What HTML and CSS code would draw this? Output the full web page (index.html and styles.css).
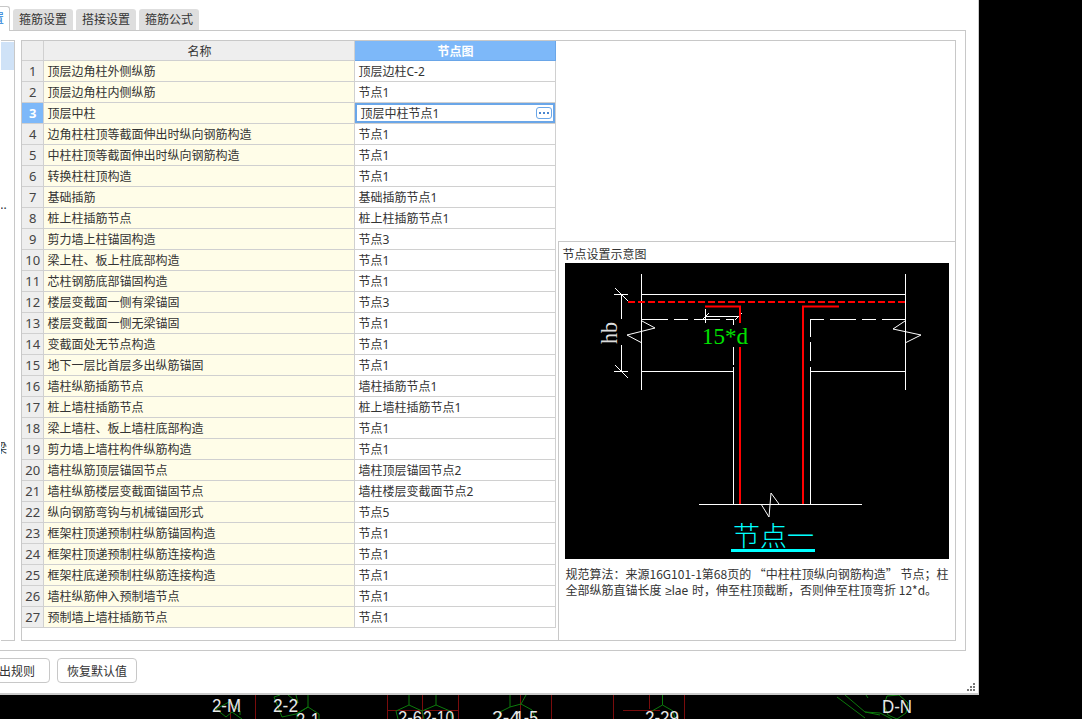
FILE: index.html
```html
<!DOCTYPE html>
<html lang="zh-CN">
<head>
    <meta charset="UTF-8">
    <title>节点设置</title>
    <link rel="stylesheet" href="styles.css">
</head>
<body>

    <div class="dialog">
        <div class="tabs">
            <div class="tab tab-active">节点设置</div>
            <div class="tab">箍筋设置</div>
            <div class="tab">搭接设置</div>
            <div class="tab">箍筋公式</div>
        </div>

        <div class="tab-body">
            <div class="side-list">
                <div class="side-selected"></div>
                <div class="side-dots">...</div>
                <div class="side-cut">梁</div>
            </div>

            <div class="grid-panel">
                <table class="grid">
                    <colgroup>
                        <col class="col-num">
                        <col class="col-name">
                        <col class="col-node">
                    </colgroup>
                    <thead>
                        <tr><th></th><th>名称</th><th class="th-active">节点图</th></tr>
                    </thead>
                    <tbody>
                        <tr><td class="num">1</td><td class="name">顶层边角柱外侧纵筋</td><td>顶层边柱C-2</td></tr>
                        <tr><td class="num">2</td><td class="name">顶层边角柱内侧纵筋</td><td>节点1</td></tr>
                        <tr>
                            <td class="num num-active">3</td>
                            <td class="name">顶层中柱</td>
                            <td class="editing"><div class="edit-box"><span>顶层中柱节点1</span><span class="more-btn"><i></i><i></i><i></i></span></div></td>
                        </tr>
                        <tr><td class="num">4</td><td class="name">边角柱柱顶等截面伸出时纵向钢筋构造</td><td>节点1</td></tr>
                        <tr><td class="num">5</td><td class="name">中柱柱顶等截面伸出时纵向钢筋构造</td><td>节点1</td></tr>
                        <tr><td class="num">6</td><td class="name">转换柱柱顶构造</td><td>节点1</td></tr>
                        <tr><td class="num">7</td><td class="name">基础插筋</td><td>基础插筋节点1</td></tr>
                        <tr><td class="num">8</td><td class="name">桩上柱插筋节点</td><td>桩上柱插筋节点1</td></tr>
                        <tr><td class="num">9</td><td class="name">剪力墙上柱锚固构造</td><td>节点3</td></tr>
                        <tr><td class="num">10</td><td class="name">梁上柱、板上柱底部构造</td><td>节点1</td></tr>
                        <tr><td class="num">11</td><td class="name">芯柱钢筋底部锚固构造</td><td>节点1</td></tr>
                        <tr><td class="num">12</td><td class="name">楼层变截面一侧有梁锚固</td><td>节点3</td></tr>
                        <tr><td class="num">13</td><td class="name">楼层变截面一侧无梁锚固</td><td>节点1</td></tr>
                        <tr><td class="num">14</td><td class="name">变截面处无节点构造</td><td>节点1</td></tr>
                        <tr><td class="num">15</td><td class="name">地下一层比首层多出纵筋锚固</td><td>节点1</td></tr>
                        <tr><td class="num">16</td><td class="name">墙柱纵筋插筋节点</td><td>墙柱插筋节点1</td></tr>
                        <tr><td class="num">17</td><td class="name">桩上墙柱插筋节点</td><td>桩上墙柱插筋节点1</td></tr>
                        <tr><td class="num">18</td><td class="name">梁上墙柱、板上墙柱底部构造</td><td>节点1</td></tr>
                        <tr><td class="num">19</td><td class="name">剪力墙上墙柱构件纵筋构造</td><td>节点1</td></tr>
                        <tr><td class="num">20</td><td class="name">墙柱纵筋顶层锚固节点</td><td>墙柱顶层锚固节点2</td></tr>
                        <tr><td class="num">21</td><td class="name">墙柱纵筋楼层变截面锚固节点</td><td>墙柱楼层变截面节点2</td></tr>
                        <tr><td class="num">22</td><td class="name">纵向钢筋弯钩与机械锚固形式</td><td>节点5</td></tr>
                        <tr><td class="num">23</td><td class="name">框架柱顶递预制柱纵筋锚固构造</td><td>节点1</td></tr>
                        <tr><td class="num">24</td><td class="name">框架柱顶递预制柱纵筋连接构造</td><td>节点1</td></tr>
                        <tr><td class="num">25</td><td class="name">框架柱底递预制柱纵筋连接构造</td><td>节点1</td></tr>
                        <tr><td class="num">26</td><td class="name">墙柱纵筋伸入预制墙节点</td><td>节点1</td></tr>
                        <tr><td class="num">27</td><td class="name">预制墙上墙柱插筋节点</td><td>节点1</td></tr>
                    </tbody>
                </table>

                <div class="preview">
                    <div class="preview-blank"></div>
                    <div class="preview-box">
                        <div class="preview-title">节点设置示意图</div>
                        <svg class="node-pic" width="384" height="296" viewBox="0 0 384 296">
                            <rect width="384" height="296" fill="#000"/>
                            <g fill="none" stroke="#fff" stroke-width="1">
                                <path d="M76.500 11V127M340.500 11V127M76.500 31.500H340.500"/>
                                <path d="M76.500 108.500H168.500M245.500 108.500H340.500"/>
                                <path d="M77 56.500H168" stroke-dasharray="26 6 14 6"/>
                                <path d="M245 56.500H340" stroke-dasharray="14 6 26 6"/>
                                <path d="M168.500 56V62M168.500 84V102M168.500 104V241"/>
                                <path d="M245.500 56V74M245.500 79V98M245.500 104V241"/>
                                <path d="M134 241.500H297"/>
                                <path d="M56.500 31V56M56.500 82V108M49 31.500H63M49 108.500H63M50 25L63 38M50 102L63 115"/>
                                <path d="M140.500 46V60M140.500 53.500H175M137 57L144 50M170 57L177 50"/>
                                <path d="M77 58L90 65L62 72L77 80"/>
                                <path d="M340 58L328 66L356 72L340 80"/>
                                <path d="M196 241L204 254L206 230L214 241"/>
                            </g>
                            <g fill="none" stroke="#f00" stroke-width="2">
                                <path d="M63 39H340" stroke-dasharray="7 3"/>
                                <path d="M140 43.500H175V60M175 84V241"/>
                                <path d="M274 43.500H238V241"/>
                            </g>
                            <text class="pic-hb" transform="translate(52 81) rotate(-90)" textLength="22" lengthAdjust="spacingAndGlyphs">hb</text>
                            <text class="pic-dim" x="137" y="81" textLength="46" lengthAdjust="spacingAndGlyphs">15*d</text>
                            <text class="pic-name" x="168" y="283">节点一</text>
                            <rect x="166" y="286" width="84" height="3" fill="#0ff"/>
                        </svg>
                        <p class="preview-note">规范算法：来源16G101-1第68页的 “中柱柱顶纵向钢筋构造” 节点；柱全部纵筋直锚长度 <span class="latin">≥lae</span> 时，伸至柱顶截断，否则伸至柱顶弯折 12*d。</p>
                    </div>
                </div>
            </div>
        </div>

        <div class="actions">
            <button class="btn btn-cut">导出规则</button>
            <button class="btn">恢复默认值</button>
        </div>

        <svg class="grip" width="8" height="8" viewBox="0 0 8 8">
            <path d="M6 0h2v2H6zM3 3h2v2H3zM6 3h2v2H6zM0 6h2v2H0zM3 6h2v2H3zM6 6h2v2H6z" fill="#777"/>
        </svg>
    </div>

    <svg class="cad" width="1082" height="24" viewBox="0 0 1082 24">
        <g fill="none" stroke="#7a0c0c" stroke-width="1">
            <path d="M230.500 8V24M255.500 0V24M387.500 0V24M422.500 0V24M458.500 0V24M520.500 0V24M551.500 0V24M613.500 0V24M649.500 0V14M684.500 0V24"/>
            <path d="M387 15.500H459M623 15.500H660"/>
        </g>
        <g fill="none" stroke="#0c7a0c" stroke-width="1">
            <path d="M216 14L229 7L240 16L240 20M216 14L226 22L232 17M232 17L242 24"/>
            <path d="M274 2L280 0M274 2L282 22L296 19L308 12M296 0L298 8L288 0"/>
            <path d="M308 0V12L297 19V24M308 12L319 19V24"/>
            <path d="M409 0V10L396 16L398 24M409 10L422 16L424 24"/>
            <path d="M436 0V10L422 16M436 10L450 16L452 24"/>
            <path d="M510 0V12L500 17L498 24M510 12L521 9L532 15L536 24M526 0L521 9"/>
            <path d="M662.500 0V10L652 16M662.500 10L673 16L675 24"/>
            <path d="M837 2L865 23M845 0L865 17L880 20M865 17L880 18L892 24M866 0L868 3"/>
            <path d="M887 1L899 0L908 8L906 18L897 24L888 20L884 10Z"/>
        </g>
        <g class="cad-text">
            <text x="212" y="17" textLength="29" lengthAdjust="spacingAndGlyphs">2-M</text>
            <text x="273" y="17" textLength="25" lengthAdjust="spacingAndGlyphs">2-2</text>
            <text x="296" y="31" textLength="24" lengthAdjust="spacingAndGlyphs">2-1</text>
            <text x="398" y="29" textLength="24" lengthAdjust="spacingAndGlyphs">2-6</text>
            <text x="423" y="29" textLength="31" lengthAdjust="spacingAndGlyphs">2-10</text>
            <text x="492" y="29" textLength="28" lengthAdjust="spacingAndGlyphs">2-4</text>
            <text x="515" y="29" textLength="23" lengthAdjust="spacingAndGlyphs">1-5</text>
            <text x="645" y="29" textLength="34" lengthAdjust="spacingAndGlyphs">2-29</text>
            <text x="882" y="18" textLength="30" lengthAdjust="spacingAndGlyphs">D-N</text>
        </g>
    </svg>

</body>
</html>
```

FILE: styles.css
```css
body {
    font-family: "Noto Sans", "Noto Sans CJK SC", sans-serif;
    font-size: 12px;
    color: #333;
    background-color: #000;
    margin: 0;
    padding: 0;
    width: 1082px;
    height: 719px;
    overflow: hidden;
}

.dialog {
    position: relative;
    box-sizing: border-box;
    width: 979px;
    height: 695px;
    background-color: #fff;
    border-right: 1px solid #ccc;
    border-bottom: 2px solid #ccc;
    overflow: hidden;
}

.tabs {
    display: flex;
    align-items: flex-end;
    gap: 3px;
    height: 30px;
    margin-left: -50px;
}

.tab {
    width: 60px;
    height: 21px;
    line-height: 21px;
    text-align: center;
    background-color: #dedede;
    border-radius: 3px 3px 0 0;
}

.tab-active {
    box-sizing: border-box;
    height: 25px;
    line-height: 24px;
    color: #2a7fd8;
    background-color: #fff;
    border: 1px solid #c8c8c8;
    border-bottom: none;
    margin-bottom: -1px;
}

.tab-body {
    display: flex;
    gap: 6px;
    box-sizing: border-box;
    width: 967px;
    height: 621px;
    margin-left: -1px;
    padding: 9px;
    padding-left: 1px;
    border: 1px solid #c8c8c8;
}

.side-list {
    position: relative;
    box-sizing: border-box;
    width: 14px;
    height: 601px;
    padding-top: 1px;
    border: 1px solid #c8c8c8;
    border-left: none;
    overflow: hidden;
}

.side-selected {
    height: 28px;
    background-color: #cfe2f7;
}

.side-dots {
    position: absolute;
    left: -4px;
    top: 155px;
}

.side-cut {
    position: absolute;
    left: -6px;
    top: 398px;
}

.grid-panel {
    display: flex;
    align-items: flex-start;
    box-sizing: border-box;
    width: 937px;
    height: 601px;
    border: 1px solid #c8c8c8;
}

.grid {
    table-layout: fixed;
    border-collapse: collapse;
    width: 534px;
    flex-shrink: 0;
}

.col-num { width: 22px; }
.col-name { width: 311px; }
.col-node { width: 201px; }

.grid th {
    height: 17px;
    line-height: 17px;
    padding: 2px 0 0;
    font-weight: normal;
    background-color: #eee;
    border: 1px solid #d0d0d0;
    border-top: none;
    border-left: none;
}

.grid th.th-active {
    color: #fff;
    font-weight: bold;
    background-color: #7db8f9;
    border-color: #6aa6e8;
}

.grid td {
    height: 19px;
    line-height: 19px;
    padding: 1px 0 0 3px;
    border: 1px solid #d0d0d0;
    border-left: none;
    white-space: nowrap;
    overflow: hidden;
}

.grid td.num {
    padding: 1px 0 0;
    text-align: center;
    font-size: 13px;
    color: #444;
    background-color: #eee;
}

.grid td.num-active {
    color: #fff;
    font-weight: bold;
    background-color: #7db8f9;
}

.grid td.name {
    background-color: #fffde8;
}

.grid td.editing {
    padding: 0;
}

.edit-box {
    display: flex;
    justify-content: space-between;
    align-items: center;
    box-sizing: border-box;
    height: 20px;
    padding: 1px 3px 0 5px;
    box-shadow: inset 0 0 0 2px #6aa6e8;
}

.more-btn {
    display: flex;
    justify-content: center;
    align-items: center;
    gap: 2px;
    box-sizing: border-box;
    width: 16px;
    height: 12px;
    margin-top: -1px;
    border: 1px solid #6aa6e8;
    border-radius: 3px;
}

.more-btn i {
    width: 2px;
    height: 2px;
    background-color: #4a86d0;
}

.preview {
    flex: 1;
    height: 599px;
}

.preview-blank {
    height: 200px;
}

.preview-box {
    box-sizing: border-box;
    height: 399px;
    padding: 5px 0 0 6px;
    border-top: 1px solid #c8c8c8;
    border-left: 1px solid #c8c8c8;
    margin-left: 2px;
}

.preview-title {
    margin-left: -3px;
    height: 16px;
    line-height: 16px;
}

.node-pic {
    display: block;
}

.preview-note {
    width: 386px;
    margin: 7px 0 0;
    font-family: "Noto Sans CJK SC", sans-serif;
    line-height: 16px;
}

.latin {
    font-family: "Noto Sans", sans-serif;
    padding: 0 1px;
}

.pic-hb {
    font-family: "Liberation Serif", serif;
    font-size: 24px;
    fill: #ddd;
}

.pic-dim {
    font-family: "Liberation Serif", serif;
    font-size: 24px;
    fill: #00e000;
}

.pic-name {
    font-family: "Noto Sans CJK SC", sans-serif;
    font-size: 27px;
    font-weight: 300;
    fill: #0ff;
}

.actions {
    display: flex;
    gap: 7px;
    margin: 7px 0 0 -30px;
}

.btn {
    width: 80px;
    height: 25px;
    padding: 0;
    font-family: inherit;
    font-size: 12px;
    color: #333;
    background-color: #fff;
    border: 1px solid #c8c8c8;
    border-radius: 4px;
}

.btn-cut {
    text-align: right;
    padding-right: 14px;
}

.grip {
    position: absolute;
    right: 3px;
    bottom: 2px;
}

.cad {
    display: block;
}

.cad-text {
    font-family: "Liberation Sans", sans-serif;
    font-size: 19px;
    fill: #e8e8e8;
}
```
